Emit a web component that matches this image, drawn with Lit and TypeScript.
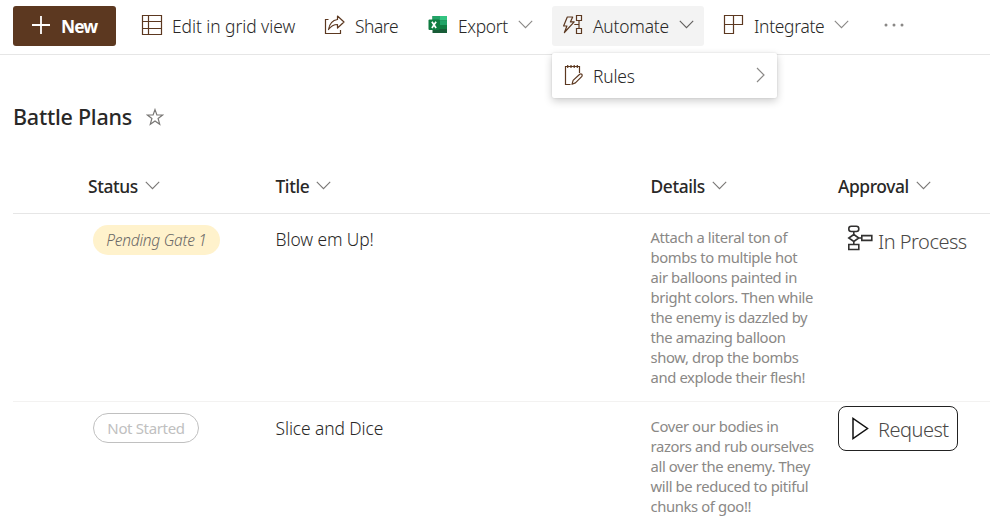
import { LitElement, html, css, svg, TemplateResult } from "lit";
import { customElement } from "lit/decorators.js";

const down = html`<svg class="chev" width="15" height="9" viewBox="0 0 15 9"><path d="M.8 .9 7.5 7.6 14.2 .9" fill="none" stroke="currentColor" stroke-width="1.1"/></svg>`;

const icon = (body: TemplateResult) =>
  html`<svg class="icon" width="22" height="22" viewBox="0 0 22 22" fill="none" stroke="#5c3820" stroke-width="1.2">${body}</svg>`;

const gridIcon = icon(svg`<path d="M1.500 1.500h19v19h-19zM1.500 7.500h19M1.500 14.500h19M7.500 1.500v19"/>`);

const shareIcon = icon(svg`<path d="M4.500 5.500H1.500v14h15v-3.500"/><path d="M13.500 2 20 8l-6.500 6v-3.500C9.500 10.500 7 12 4.500 15.500 5.500 9.500 8.600 6.200 13.500 5.500z" stroke-linejoin="round"/>`);

const excelIcon = html`<svg class="icon" width="22" height="22" viewBox="0 0 22 22">
  <path d="M5.500 2H20v17H5.500z" fill="#185c37"/>
  <path d="M5.500 2h7.500v4.500H5.500z" fill="#21a366"/><path d="M13 2h7v4.500h-7z" fill="#33c481"/>
  <path d="M13 6.500h7V11h-7z" fill="#21a366"/><path d="M5.500 6.500H13V15H5.500zM13 11h7v4h-7z" fill="#107c41"/>
  <rect x="1.500" y="5.500" width="11" height="10.500" rx="1" fill="#107c41"/>
  <path d="m4.900 7.700 4.200 6.200M9.100 7.700l-4.200 6.200" stroke="#fff" stroke-width="1.700"/>
</svg>`;

const flowIcon = icon(svg`<path d="M5.300 3h5.400L8.400 7.900h3.800L2.400 18.500 4.900 12H1.600z" stroke-linejoin="round"/><path d="M14.500 1.500h5v5h-5zM14.500 14.500h5v5h-5zM17 6.500v8M12.300 10.500H17"/>`);

const integrateIcon = icon(svg`<path d="M1.500 1.500h18v9h-18zM1.500 10.500v9h9v-18"/>`);

const rulesIcon = icon(svg`<path d="M7.500 20.500h-5v-18h14V9M4.700 1v3M8 1v3M11.200 1v3M14.300 1v3"/><path d="m9 20.300 1.100-3.900 6.600-6.200c1.700-1 3.100.5 2.200 2.200l-6.500 6.500z" stroke-linejoin="round"/>`);

@customElement("app-root")
export class AppRoot extends LitElement {
  static styles = css`
    :host {
      display: block;
      height: 530px;
      overflow: hidden;
      background: #fff;
      color: #292827;
      font: 350 17.400px/24px "Noto Sans", "Open Sans", sans-serif;
      white-space: nowrap;
    }
    * { box-sizing: border-box; }
    svg { display: block; flex: none; }
    .bar {
      display: flex;
      align-items: center;
      height: 55px;
      padding: 0 0 3px 13px;
      border-bottom: 1px solid #e6e6e6;
    }
    .new {
      display: flex;
      align-items: center;
      gap: 10px;
      width: 103px;
      height: 40px;
      padding-left: 18px;
      margin-right: 15px;
      border-radius: 3px;
      background: #5c3820;
      color: #fff;
      font-weight: 700;
      letter-spacing: -1px;
    }
    .new svg { margin-bottom: 2px; }
    .new span { margin-top: 1px; }
    .cmd {
      position: relative;
      display: flex;
      align-items: center;
      height: 40px;
      padding-left: 10px;
      border-radius: 3px;
    }
    .cmd .label { margin: 1px 0 0 9px; }
    .cmd .icon { margin-bottom: 1px; }
    .cmd .chev { margin: 0 0 3px auto; color: #8a8886; }
    .edit { width: 174px; margin-right: 9px; letter-spacing: -.05px; }
    .share { width: 94px; margin-right: 9px; letter-spacing: -.45px; }
    .export { width: 116px; margin-right: 19px; letter-spacing: -.35px; }
    .automate { width: 152px; margin-right: 9px; padding-right: 10px; background: #f3f3f3; letter-spacing: -.2px; }
    .automate > .chev { color: #605e5c; }
    .integrate { width: 136px; letter-spacing: -.3px; }
    .dots { margin-left: 35px; margin-bottom: 1px; }
    .menu {
      position: absolute;
      z-index: 2;
      left: 0;
      top: 47px;
      display: flex;
      align-items: center;
      width: 225px;
      height: 45px;
      padding: 0 12px 0 11px;
      border-radius: 2px;
      background: #fff;
      box-shadow: 0 3px 8px rgba(0, 0, 0, .2), 0 0 2px rgba(0, 0, 0, .12);
    }
    .menu .label { margin-left: 8px; }
    .next { margin-left: auto; }
    .heading {
      display: flex;
      align-items: center;
      gap: 14px;
      height: 40px;
      margin: 42px 0 0 13px;
    }
    h1 { margin: 0; font-size: 21.500px; line-height: 30px; font-weight: 550; letter-spacing: -.23px; }
    .row {
      display: grid;
      grid-template-columns: 187.500px 375px 187.500px 1fr;
      margin-left: 13px;
      padding-left: 75px;
      border-bottom: 1px solid #f3f2f1;
    }
    .head { height: 54px; margin-top: 23px; align-items: center; border-color: #e6e6e6; font-weight: 550; letter-spacing: -.4px; }
    .head > div { display: flex; align-items: center; gap: 7px; }
    .head span { margin-bottom: 2px; }
    .head .chev { color: #797775; margin-bottom: 3px; }
    .first { height: 188px; }
    .last { height: 128px; border: 0; }
    .pill {
      display: flex;
      align-items: center;
      justify-content: center;
      height: 30px;
      margin: 11px 0 0 5px;
      border-radius: 15px;
      font-size: 15px;
      letter-spacing: -.35px;
    }
    .pending { width: 127px; padding-bottom: 1px; background: #fff2cc; color: #6b6967; font-style: italic; font-size: 15.500px; letter-spacing: -.25px; }
    .idle { width: 106px; border: 1px solid #c0c0c0; color: #c0c0c0; font-weight: 400; }
    .title { margin-top: 13px; letter-spacing: -.08px; }
    .last .title { margin-top: 14px; }
    .details { margin-top: 13px; white-space: pre-line; font-size: 14.800px; font-weight: 400; line-height: 20px; letter-spacing: -.37px; color: #8a8886; }
    .last .details { margin-top: 14px; }
    .state { display: flex; align-items: center; font-size: 20px; font-weight: 300; letter-spacing: -.5px; color: #4a4846; }
    .process { height: 30px; margin: 10px 0 0 9px; gap: 5px; }
    .process svg { margin-bottom: 2px; }
    .process span { margin-top: 5px; }
    .request {
      width: 120px;
      height: 45px;
      margin-top: 4px;
      padding-left: 13px;
      gap: 9px;
      border: 1px solid #222;
      border-radius: 8px;
    }
    .request span { margin-top: 2px; }
  `;

  private rows = [
    "Attach a literal ton of\nbombs to multiple hot\nair balloons painted in\nbright colors. Then while\nthe enemy is dazzled by\nthe amazing balloon\nshow, drop the bombs\nand explode their flesh!",
    "Cover our bodies in\nrazors and rub ourselves\nall over the enemy. They\nwill be reduced to pitiful\nchunks of goo!!",
  ];

  render() {
    return html`
      <div class="bar">
        <div class="new"><svg width="20" height="20" viewBox="0 0 20 20"><path d="M10 1v18M1 10h18" stroke="#fff" stroke-width="1.800"/></svg><span>New</span></div>
        <div class="cmd edit">${gridIcon}<span class="label">Edit in grid view</span></div>
        <div class="cmd share">${shareIcon}<span class="label">Share</span></div>
        <div class="cmd export">${excelIcon}<span class="label">Export</span>${down}</div>
        <div class="cmd automate">${flowIcon}<span class="label">Automate</span>${down}
          <div class="menu">${rulesIcon}<span class="label">Rules</span>
            <svg class="next" width="9" height="16" viewBox="0 0 9 16"><path d="m1 1 7 7-7 7" fill="none" stroke="#8a8886" stroke-width="1.200"/></svg>
          </div>
        </div>
        <div class="cmd integrate">${integrateIcon}<span class="label">Integrate</span>${down}</div>
        <svg class="dots" width="20" height="4" viewBox="0 0 20 4" fill="#8a8886"><circle cx="2" cy="2" r="1.500"/><circle cx="10" cy="2" r="1.500"/><circle cx="18" cy="2" r="1.500"/></svg>
      </div>
      <div class="heading"><h1>Battle Plans</h1>
        <svg width="18" height="18" viewBox="0 0 18 18"><path d="m9 1.600 1.900 5.300 5.700.1-4.500 3.500 1.600 5.700L9 12.900l-4.700 3.300 1.600-5.700L1.400 7l5.700-.1z" fill="none" stroke="#797775" stroke-width="1.200"/></svg>
      </div>
      <div class="row head">${["Status", "Title", "Details", "Approval"].map((t) => html`<div><span>${t}</span>${down}</div>`)}</div>
      <div class="row first">
        <div><div class="pill pending">Pending Gate 1</div></div>
        <div class="title">Blow em Up!</div>
        <div class="details">${this.rows[0]}</div>
        <div><div class="state process">
          <svg width="26" height="26" viewBox="0 0 26 26" fill="none" stroke="#323130" stroke-width="1.600"><rect x="1.800" y="1.300" width="10" height="5.200" rx="2.400"/><path d="M6.800 6.500v3l5 3.500-5 3.500-5-3.500 5-3.500M11.800 13h3M6.800 16.500v3M1.800 19.500h10v5h-10zM14.800 10.600h10v4.800h-10z"/></svg>
          <span>In Process</span></div></div>
      </div>
      <div class="row last">
        <div><div class="pill idle">Not Started</div></div>
        <div class="title">Slice and Dice</div>
        <div class="details">${this.rows[1]}</div>
        <div><div class="state request">
          <svg width="17" height="24" viewBox="0 0 17 24"><path d="M1 1.500v20L15.500 11.500z" fill="none" stroke="#111" stroke-width="1.500"/></svg>
          <span>Request</span></div></div>
      </div>`;
  }
}
